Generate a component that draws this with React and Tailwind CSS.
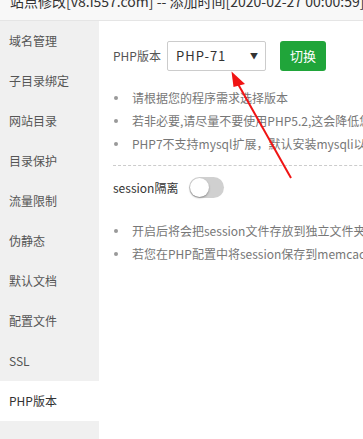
import React from 'react';

const menu = ['域名管理', '子目录绑定', '网站目录', '目录保护', '流量限制', '伪静态', '默认文档', '配置文件', 'SSL', 'PHP版本', 'Tomcat'];

const tipsTop = [
  '请根据您的程序需求选择版本',
  '若非必要,请尽量不要使用PHP5.2,这会降低您的服务器安全性；',
  'PHP7不支持mysql扩展，默认安装mysqli以及mysql-pdo。',
];

const tipsBottom = [
  '开启后将会把session文件存放到独立文件夹独立文件夹',
  '若您在PHP配置中将session保存到memcache/redis等缓存器时，请不要开启此选项。',
];

const Tips = ({ items }) => (
  <ul className="text-[12px] leading-[23px] text-[#777]">
    {items.map((t, i) => (
      <li key={i} className="flex items-center whitespace-nowrap">
        <span className="w-[4px] h-[4px] rounded-full bg-[#999] ml-[1px] mr-[14px] shrink-0" />
        {t}
      </li>
    ))}
  </ul>
);

export default function App() {
  const active = 'PHP版本';

  return (
    <div
      className="relative w-[363px] h-[439px] overflow-hidden bg-white text-[#333]"
      style={{ fontFamily: '"Noto Sans CJK SC", "Noto Sans", sans-serif' }}
    >
      {/* Title bar */}
      <div className="h-[21px] bg-[#f8f8f8] border-b border-[#e5e5e5] overflow-hidden pl-[10px]">
        <div className="mt-[-6px] text-[14px] leading-[14px] whitespace-nowrap text-[#333]">
          站点修改[v8.i557.com] -- 添加时间[2020-02-27 00:00:59]
        </div>
      </div>

      <div className="flex">
        {/* Sidebar */}
        <div className="w-[99px] shrink-0 bg-[#f0f0f0] h-[418px]">
          {menu.map((m) => (
            <div
              key={m}
              className={`h-[40px] flex items-center pl-[9px] text-[12px] whitespace-nowrap ${
                m === active ? 'bg-white text-[#333] h-[37px] mb-[3px]' : 'text-[#555]'
              }`}
            >
              {m}
            </div>
          ))}
        </div>

        {/* Content */}
        <div className="flex-1 min-w-0 pl-[14px] pt-[20px] overflow-hidden">
          <div className="flex items-center h-[30px]">
            <span className="text-[12px] text-[#555] mr-[6px] whitespace-nowrap">PHP版本</span>
            <div className="w-[99px] h-[30px] border border-[#ccc] rounded-[2px] flex items-center justify-between pl-[8px] pr-[7px]">
              <span className="text-[13px] tracking-[1px] text-[#333]">PHP-71</span>
              <span className="text-[8px] text-[#333]">▼</span>
            </div>
            <button className="ml-[14px] w-[46px] h-[30px] rounded-[3px] bg-[#20a53a] text-white text-[13px]">
              切换
            </button>
          </div>

          <div className="mt-[15px]">
            <Tips items={tipsTop} />
          </div>

          <div className="mt-[10px] border-t border-dashed border-[#ccc] w-[400px]" />

          <div className="mt-[11px] flex items-center h-[21px]">
            <span className="text-[12px] text-[#333] whitespace-nowrap mr-[11px]">session隔离</span>
            <div className="w-[35px] h-[21px] rounded-full bg-[#d0d0d0] flex items-center px-[1px]">
              <div className="w-[19px] h-[19px] rounded-full bg-white shadow-[0_1px_2px_rgba(0,0,0,0.35)]" />
            </div>
          </div>

          <div className="mt-[21px]">
            <Tips items={tipsBottom} />
          </div>
        </div>
      </div>

      {/* Red annotation arrow */}
      <svg className="absolute left-0 top-0 pointer-events-none" width="363" height="439">
        <line x1="291" y1="178" x2="238" y2="84" stroke="#f01414" strokeWidth="2" />
        <polygon points="231.5,71.5 245,84 233.5,87" fill="#f01414" />
      </svg>
    </div>
  );
}
